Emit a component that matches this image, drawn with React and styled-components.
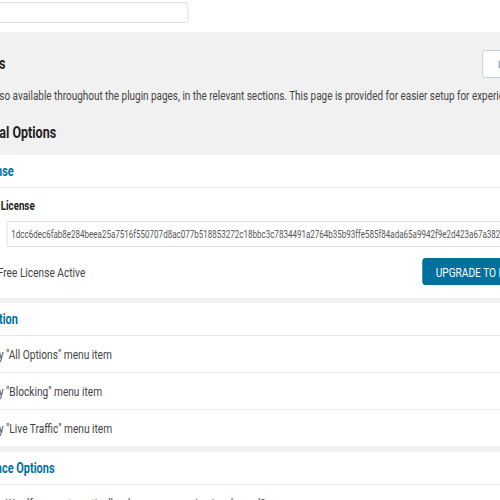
import React from 'react';
import styled, { createGlobalStyle } from 'styled-components';

const GlobalStyle = createGlobalStyle`
  html, body { margin: 0; padding: 0; background: #f1f1f1; }
  body {
    font-family: Roboto, "Noto Sans", "Liberation Sans", Arial, sans-serif;
    color: #2d2d2d;
  }
  * { box-sizing: border-box; }
`;

/* The reference shows the options page scrolled sideways and squeezed horizontally. */
const Viewport = styled.div`
  width: 500px;
  height: 500px;
  overflow: hidden;
  background: #f1f1f1;
`;

const Squeeze = styled.div`
  width: 667px;
  transform: scaleX(0.75);
  transform-origin: 0 0;
`;

const Page = styled.div`
  width: 930px;
  margin-left: -135px;
`;

const TopStrip = styled.div`
  height: 32px;
  background: #fff;
  padding: 2px 0 0 20px;
`;

const SearchInput = styled.input`
  display: block;
  width: 366px;
  height: 21px;
  border: 1px solid #d9d9d9;
  border-radius: 3px;
  background: #fff;
  box-shadow: inset 0 1px 2px rgba(0, 0, 0, 0.04);
  font: 13px Roboto, sans-serif;
  padding: 0 6px;
  outline: none;
`;

const Band = styled.header`
  background: #f1f1f1;
  padding: 18px 20px 12px 14.3px;
`;

const ControlsRow = styled.div`
  display: flex;
  align-items: center;
  justify-content: space-between;
  height: 28px;
`;

const TitleGroup = styled.div`
  display: flex;
  align-items: center;
  gap: 13.6px;
`;

const PageTitle = styled.h2`
  margin: 0;
  font-size: 16.7px;
  line-height: 20px;
  font-weight: 700;
  color: #222;
`;

const OutlineButton = styled.button`
  width: 132px;
  height: 28px;
  padding: 0 0 0 20px;
  text-align: left;
  border: 1px solid #b7d0dd;
  border-radius: 3px;
  background: #fff;
  color: #5f90ad;
  font: 13.5px Roboto, sans-serif;
`;

const Description = styled.p`
  margin: 9px 0 0 0.6px;
  font-size: 13.25px;
  line-height: 18px;
  color: #444;
  white-space: nowrap;
`;

const GroupTitle = styled.h3`
  margin: 18px 0 0;
  font-size: 16.7px;
  line-height: 20px;
  font-weight: 700;
  color: #222;
`;

const Card = styled.section`
  background: #fff;
  margin-bottom: ${(p) => p.$gap || 6}px;
`;

const CardHeader = styled.div`
  height: 33px;
  display: flex;
  align-items: center;
  padding: 0 28px;
  border-bottom: 1px solid #e6e6e6;
  color: #00709e;
  font-size: 14.6px;
  font-weight: 700;
`;

const LicenseBody = styled.div`
  padding: 10px 32px 13px;
`;

const FieldLabel = styled.div`
  margin-left: 7.4px;
  font-size: 13px;
  line-height: 16px;
  font-weight: 700;
  color: #222;
`;

const KeyInput = styled.input`
  display: block;
  margin: 7px 0 0 112px;
  width: 800px;
  height: 26px;
  border: 1px solid #dcdcdc;
  border-radius: 2px;
  padding: 0 5px;
  font: 10.7px Roboto, sans-serif;
  color: #555;
  background: #fff;
  outline: none;
`;

const StatusRow = styled.div`
  margin-top: 11px;
  height: 27px;
  display: flex;
  align-items: center;
  justify-content: space-between;
`;

const StatusText = styled.span`
  margin-left: 100px;
  font-size: 13.56px;
  color: #444;
`;

const PrimaryButton = styled.a`
  width: 200px;
  height: 27px;
  display: flex;
  align-items: center;
  padding-left: 18px;
  background: #00709e;
  border-radius: 4px;
  color: #fff;
  font-size: 13.5px;
  text-decoration: none;
  text-transform: uppercase;
`;

const OptionRow = styled.div`
  height: ${(p) => (p.$last ? 36 : 37)}px;
  display: flex;
  align-items: center;
  gap: 20px;
  padding-left: 60px;
  border-bottom: ${(p) => (p.$last ? 'none' : '1px solid #e6e6e6')};
  font-size: 13.56px;
  color: #444;
`;

const Checkbox = styled.span`
  width: 16px;
  height: 16px;
  flex: none;
  border: 1px solid #bbb;
  border-radius: 2px;
  background: #fff;
`;

const Logo = () => (
  <svg width="32" height="28" viewBox="0 0 32 28" aria-hidden="true">
    <path d="M2 4 L8 24 L16 10 L24 24 L30 4" fill="none" stroke="#00709e" strokeWidth="4" />
  </svg>
);

const viewOptions = [
  'Display "All Options" menu item',
  'Display "Blocking" menu item',
  'Display "Live Traffic" menu item',
];

export default function App() {
  return (
    <>
      <GlobalStyle />
      <Viewport>
        <Squeeze>
          <Page>
            <TopStrip>
              <SearchInput type="text" aria-label="Search options" />
            </TopStrip>
            <Band>
              <ControlsRow>
                <TitleGroup>
                  <Logo />
                  <PageTitle>All Options</PageTitle>
                </TitleGroup>
                <OutlineButton type="button">Cancel Changes</OutlineButton>
              </ControlsRow>
              <Description>
                These options are also available throughout the plugin pages, in the relevant sections. This page is
                provided for easier setup for experienced Wordfence users.
              </Description>
              <GroupTitle>Wordfence Global Options</GroupTitle>
            </Band>

            <Card $gap={5}>
              <CardHeader>Wordfence License</CardHeader>
              <LicenseBody>
                <FieldLabel>Your Wordfence License</FieldLabel>
                <KeyInput
                  readOnly
                  value="1dcc6dec6fab8e284beea25a7516f550707d8ac077b518853272c18bbc3c7834491a2764b35b93ffe585f84ada65a9942f9e2d423a67a382f5e1f0c39"
                />
                <StatusRow>
                  <StatusText>Free License Active</StatusText>
                  <PrimaryButton href="#">Upgrade to Premium</PrimaryButton>
                </StatusRow>
              </LicenseBody>
            </Card>

            <Card $gap={6}>
              <CardHeader>View Customization</CardHeader>
              {viewOptions.map((label, i) => (
                <OptionRow key={label} $last={i === viewOptions.length - 1}>
                  <Checkbox />
                  <span>{label}</span>
                </OptionRow>
              ))}
            </Card>

            <Card>
              <CardHeader>General Wordfence Options</CardHeader>
              <OptionRow $last>
                <Checkbox />
                <span>Update Wordfence automatically when a new version is released?</span>
              </OptionRow>
            </Card>
          </Page>
        </Squeeze>
      </Viewport>
    </>
  );
}
